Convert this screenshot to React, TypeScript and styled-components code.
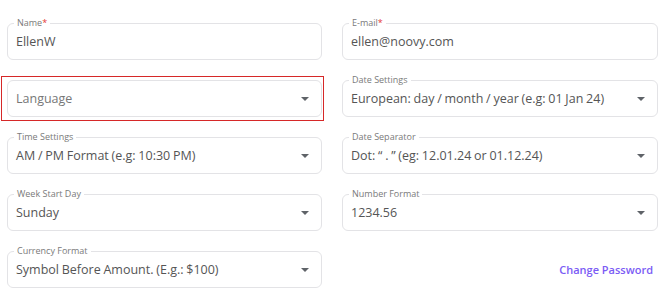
import styled, { createGlobalStyle } from "styled-components";

const GlobalStyle = createGlobalStyle`
  body {
    margin: 0;
    background: #fff;
    font-family: "Open Sans", "Liberation Sans", sans-serif;
  }
`;

const Form = styled.div`
  display: grid;
  grid-template-columns: 315px 316px;
  column-gap: 20px;
  row-gap: 20px;
  padding: 23px 12px 0 7px;
  width: 670px;
  box-sizing: border-box;
`;

const Highlight = styled.div`
  border: 1px solid #d62828;
  margin: -4px -2px -4px -6px;
  padding: 3px 1px 3px 5px;
`;

const Box = styled.div`
  position: relative;
  height: 37px;
  box-sizing: border-box;
  border: 1px solid #e3e3e6;
  border-radius: 6px;
  display: flex;
  align-items: center;
  padding: 0 12px 0 8px;
`;

const Label = styled.span`
  position: absolute;
  top: -7px;
  left: 6px;
  padding: 0 3px;
  background: #fff;
  font-size: 9px;
  line-height: 12px;
  color: #7a7a7a;
`;

const Star = styled.span`
  color: #e53935;
`;

const Value = styled.span<{ $placeholder?: boolean }>`
  flex: 1;
  font-size: 12.5px;
  word-spacing: -0.5px;
  color: ${(p) => (p.$placeholder ? "#777" : "#555")};
  white-space: nowrap;
`;

const Arrow = styled.span`
  width: 0;
  height: 0;
  border-left: 4px solid transparent;
  border-right: 4px solid transparent;
  border-top: 4px solid #5f6368;
`;

const LinkRow = styled.div`
  display: flex;
  align-items: center;
  justify-content: flex-end;
  padding-right: 5px;
`;

const Link = styled.a`
  color: #7b5cf5;
  font-size: 11px;
  font-weight: 600;
  text-decoration: none;
  cursor: pointer;
`;

type FieldProps = {
  label?: string;
  required?: boolean;
  value: string;
  select?: boolean;
  placeholder?: boolean;
};

const Field = ({ label, required, value, select, placeholder }: FieldProps) => (
  <Box>
    {label && (
      <Label>
        {label}
        {required && <Star>*</Star>}
      </Label>
    )}
    <Value $placeholder={placeholder}>{value}</Value>
    {select && <Arrow />}
  </Box>
);

const App = () => {
  return (
    <>
      <GlobalStyle />
      <Form>
        <Field label="Name" required value="EllenW" />
        <Field label="E-mail" required value="ellen@noovy.com" />
        <Highlight>
          <Field value="Language" select placeholder />
        </Highlight>
        <Field
          label="Date Settings"
          value="European: day / month / year (e.g: 01 Jan 24)"
          select
        />
        <Field label="Time Settings" value="AM / PM Format (e.g: 10:30 PM)" select />
        <Field
          label="Date Separator"
          value={"Dot: \u201c . \u201d (eg: 12.01.24 or 01.12.24)"}
          select
        />
        <Field label="Week Start Day" value="Sunday" select />
        <Field label="Number Format" value="1234.56" select />
        <Field
          label="Currency Format"
          value="Symbol Before Amount. (E.g.: $100)"
          select
        />
        <LinkRow>
          <Link>Change Password</Link>
        </LinkRow>
      </Form>
    </>
  );
};

export default App;
